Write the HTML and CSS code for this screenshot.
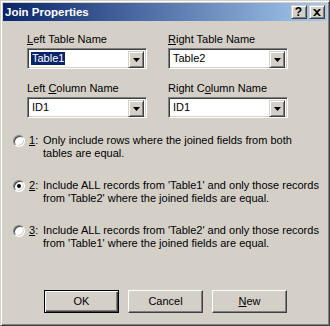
FILE: index.html
```html
<!DOCTYPE html>
<html lang="en">
<head>
  <title>Join Properties</title>
  <link rel="stylesheet" href="styles.css">
</head>
<body>

<div class="window">
  <div class="titlebar">
    <span class="title">Join Properties</span>
    <div class="caption-buttons">
      <div class="cap-btn"><span class="help">?</span></div>
      <div class="cap-btn">
        <svg width="8" height="7" viewBox="0 0 8 7">
          <path d="M0 0h2l2 2 2-2h2L5 3.5 8 7H6L4 5 2 7H0l3-3.5z" fill="#000"/>
        </svg>
      </div>
    </div>
  </div>

  <div class="client">
    <div class="fields">
      <div class="field">
        <div class="label"><u>L</u>eft Table Name</div>
        <div class="combo">
          <span class="combo-text selected">Table1</span>
          <div class="drop-btn"><svg width="7" height="4" viewBox="0 0 7 4"><path d="M0 0h7L3.5 4z" fill="#000"/></svg></div>
        </div>
      </div>
      <div class="field">
        <div class="label"><u>R</u>ight Table Name</div>
        <div class="combo">
          <span class="combo-text">Table2</span>
          <div class="drop-btn"><svg width="7" height="4" viewBox="0 0 7 4"><path d="M0 0h7L3.5 4z" fill="#000"/></svg></div>
        </div>
      </div>
      <div class="field">
        <div class="label">Left <u>C</u>olumn Name</div>
        <div class="combo">
          <span class="combo-text">ID1</span>
          <div class="drop-btn"><svg width="7" height="4" viewBox="0 0 7 4"><path d="M0 0h7L3.5 4z" fill="#000"/></svg></div>
        </div>
      </div>
      <div class="field">
        <div class="label">Right C<u>o</u>lumn Name</div>
        <div class="combo">
          <span class="combo-text">ID1</span>
          <div class="drop-btn"><svg width="7" height="4" viewBox="0 0 7 4"><path d="M0 0h7L3.5 4z" fill="#000"/></svg></div>
        </div>
      </div>
    </div>

    <div class="options">
      <div class="option">
        <div class="radio"></div>
        <span class="num"><u>1</u>:</span>
        <span class="opt-text">Only include rows where the joined fields from both<br>tables are equal.</span>
      </div>
      <div class="option">
        <div class="radio checked"><span class="dot"></span></div>
        <span class="num"><u>2</u>:</span>
        <span class="opt-text">Include ALL records from 'Table1' and only those records<br>from 'Table2' where the joined fields are equal.</span>
      </div>
      <div class="option">
        <div class="radio"></div>
        <span class="num"><u>3</u>:</span>
        <span class="opt-text">Include ALL records from 'Table2' and only those records<br>from 'Table1' where the joined fields are equal.</span>
      </div>
    </div>

    <div class="buttons">
      <div class="btn default">OK</div>
      <div class="btn">Cancel</div>
      <div class="btn"><u>N</u>ew</div>
    </div>
  </div>
</div>

</body>
</html>
```

FILE: styles.css
```css
* {
  box-sizing: border-box;
}

body {
  margin: 0;
  padding: 0;
  font-family: "Liberation Sans", Arial, sans-serif;
  font-size: 11px;
  line-height: 13px;
  color: #000;
  background-color: #d4d0c8;
}

.window {
  width: 330px;
  height: 326px;
  padding: 2px;
  border: 1px solid;
  border-color: #d4d0c8 #404040 #404040 #d4d0c8;
  box-shadow: inset 1px 1px #fff, inset -1px -1px #808080;
  background-color: #d4d0c8;
}

.titlebar {
  height: 18px;
  display: flex;
  align-items: center;
  justify-content: space-between;
  background: linear-gradient(to right, #0a246a, #a6caf0);
}
.title {
  padding-left: 2px;
  color: #fff;
  font-weight: bold;
  font-size: 11.5px;
}
.caption-buttons {
  display: flex;
  gap: 2px;
  margin-right: 2px;
}
.cap-btn {
  width: 16px;
  height: 14px;
  display: flex;
  align-items: center;
  justify-content: center;
  border: 1px solid;
  border-color: #d4d0c8 #404040 #404040 #d4d0c8;
  box-shadow: inset 1px 1px #fff, inset -1px -1px #808080;
  background-color: #d4d0c8;
}
.help {
  font-weight: bold;
  font-size: 12px;
  line-height: 12px;
  margin-left: -1px;
}

.client {
  margin-top: 1px;
  padding-top: 11px;
}

.fields {
  display: grid;
  grid-template-columns: 120px 120px;
  column-gap: 21px;
  row-gap: 13px;
  padding-left: 24px;
}
.label {
  height: 13px;
  margin-bottom: 2px;
}
.combo {
  width: 120px;
  height: 21px;
  display: flex;
  padding: 2px;
  border: 1px solid;
  border-color: #808080 #fff #fff #808080;
  box-shadow: inset 1px 1px #404040, inset -1px -1px #d4d0c8;
  background-color: #fff;
}
.combo-text {
  flex: 1;
  align-self: flex-start;
  margin-top: 1px;
  padding-left: 2px;
  height: 13px;
}
.combo-text.selected {
  flex: none;
  margin-left: 1px;
  padding: 0 1px;
  color: #fff;
  background-color: #0a246a;
}
.combo-text.selected + .drop-btn {
  margin-left: auto;
}
.drop-btn {
  width: 16px;
  height: 17px;
  display: flex;
  align-items: center;
  justify-content: center;
  border: 1px solid;
  border-color: #d4d0c8 #404040 #404040 #d4d0c8;
  box-shadow: inset 1px 1px #fff, inset -1px -1px #808080;
  background-color: #d4d0c8;
}
.drop-btn svg {
  margin-left: 1px;
}

.options {
  display: flex;
  flex-direction: column;
  gap: 19px;
  margin-top: 16px;
  padding-left: 10px;
}
.option {
  display: flex;
  align-items: flex-start;
}
.radio {
  width: 12px;
  height: 12px;
  margin-top: 1px;
  margin-right: 4px;
  display: flex;
  align-items: center;
  justify-content: center;
  border-radius: 50%;
  border: 1px solid;
  border-color: #808080 #fff #fff #808080;
  box-shadow: inset 1px 1px #404040, inset -1px -1px #d4d0c8;
  background-color: #fff;
}
.dot {
  width: 4px;
  height: 4px;
  border-radius: 50%;
  background-color: #000;
}
.num {
  width: 14px;
  flex: none;
}

.buttons {
  display: flex;
  gap: 9px;
  margin-top: 40px;
  padding-left: 41px;
}
.btn {
  width: 75px;
  height: 23px;
  display: flex;
  align-items: center;
  justify-content: center;
  border: 1px solid;
  border-color: #fff #404040 #404040 #fff;
  box-shadow: inset -1px -1px #808080;
  background-color: #d4d0c8;
}
.btn.default {
  border-color: #000;
  box-shadow: inset 1px 1px #fff, inset -1px -1px #404040, inset -2px -2px #808080;
}
```
